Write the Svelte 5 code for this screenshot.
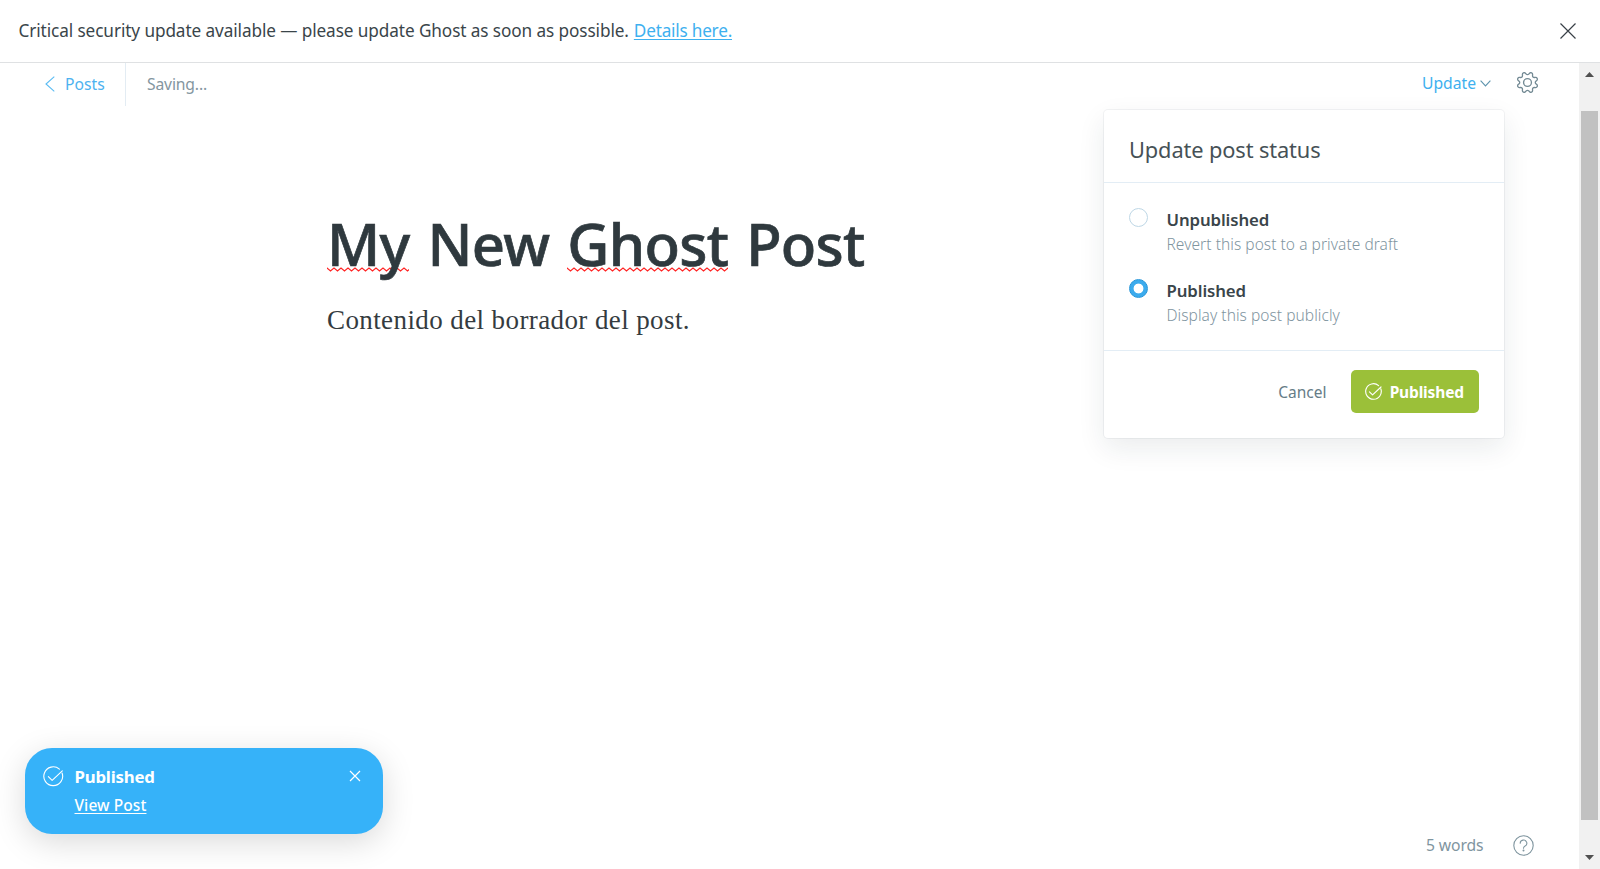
<script>
  const options = [
    { label: 'Unpublished', hint: 'Revert this post to a private draft' },
    { label: 'Published', hint: 'Display this post publicly' }
  ];
  let selected = $state('Published');
</script>

{#snippet check(size, width)}
  <svg width={size} height={size} viewBox="0 0 24 24" fill="none" stroke="currentColor" stroke-width={width} stroke-linecap="round" stroke-linejoin="round">
    <path d="M22.3 8.2A11 11 0 1 1 19.2 3.7" />
    <path d="M6.3 12.4l4.4 4.4L22.6 5.6" />
  </svg>
{/snippet}

<div class="app">
  <div class="banner">
    <p><span class="alert">Critical security update available — please update Ghost as soon as possible.</span><a href="#details">Details here.</a></p>
    <svg class="dismiss" width="16" height="16" viewBox="0 0 16 16" fill="none" stroke="#394047" stroke-width="1.2"><path d="M.5.5l15 15M15.5.5l-15 15" /></svg>
  </div>

  <div class="body">
    <main>
      <header>
        <a class="back" href="#posts">
          <svg width="10" height="16" viewBox="0 0 10 16" fill="none" stroke="#5bbcf3" stroke-width="1.1"><path d="M9.3.7L1 8l8.3 7.3" /></svg>
          <span>Posts</span>
        </a>
        <span class="status">Saving...</span>
        <div class="actions">
          <span class="update">Update</span>
          <svg class="chev" width="11" height="7" viewBox="0 0 11 7" fill="none" stroke="#5d93ad" stroke-width="1.1"><path d="M.6.6l4.9 5.3L10.4.6" /></svg>
          <svg class="gear" width="21" height="21" viewBox="0 0 24 24" fill="none" stroke="#738a94" stroke-width="1.5" stroke-linejoin="round">
            <circle cx="12" cy="12" r="4.5" />
            <path d="M10.546 2.438a1.957 1.957 0 0 0 2.908 0L14.4 1.4a1.959 1.959 0 0 1 3.41 1.413l-.071 1.4a1.958 1.958 0 0 0 2.051 2.054l1.4-.071A1.959 1.959 0 0 1 22.6 9.6l-1.04.95a1.959 1.959 0 0 0 0 2.907l1.04.943a1.959 1.959 0 0 1-1.413 3.41l-1.4-.071a1.958 1.958 0 0 0-2.056 2.056l.071 1.4A1.959 1.959 0 0 1 14.4 22.6l-.941-1.041a1.959 1.959 0 0 0-2.908 0L9.6 22.6a1.959 1.959 0 0 1-3.408-1.408l.072-1.4a1.958 1.958 0 0 0-2.056-2.056l-1.4.071A1.958 1.958 0 0 1 1.4 14.4l1.041-.943a1.959 1.959 0 0 0 0-2.907L1.4 9.6a1.958 1.958 0 0 1 1.408-3.408l1.4.071a1.958 1.958 0 0 0 2.056-2.052l-.072-1.403A1.959 1.959 0 0 1 9.6 1.4z" />
          </svg>
        </div>
      </header>

      <article>
        <h1><span class="typo">My</span> New <span class="typo">Ghost</span> Post</h1>
        <p>Contenido del borrador del post.</p>
      </article>

      <footer>
        <span>5 words</span>
        <svg width="21" height="21" viewBox="0 0 21 21" fill="none" stroke="#7f959f" stroke-width="1.1" stroke-linecap="round">
          <circle cx="10.5" cy="10.5" r="9.7" />
          <path d="M7.2 8.2a3.3 3.1 0 1 1 4.9 2.7c-1.1.6-1.6 1-1.6 2.4" />
          <circle cx="10.5" cy="15.6" r=".45" fill="#7f959f" />
        </svg>
      </footer>
    </main>

    <div class="scrollbar">
      <svg width="9" height="5" viewBox="0 0 9 5"><path d="M0 5L4.5 0 9 5z" fill="#505050" /></svg>
      <div class="thumb"></div>
      <svg width="9" height="5" viewBox="0 0 9 5"><path d="M0 0l4.5 5L9 0z" fill="#505050" /></svg>
    </div>
  </div>

  <section class="card">
    <h2>Update post status</h2>
    <div class="options">
      {#each options as o}
        <div class="option">
          <button class="radio" class:on={selected === o.label} aria-label={o.label} onclick={() => (selected = o.label)}></button>
          <div class="text">
            <div class="label">{o.label}</div>
            <div class="hint">{o.hint}</div>
          </div>
        </div>
      {/each}
    </div>
    <div class="buttons">
      <span class="cancel">Cancel</span>
      <button class="publish">{@render check(17, 1.6)}<span>Published</span></button>
    </div>
  </section>

  <aside class="toast">
    {@render check(20.5, 1.3)}
    <div class="message">
      <div class="strong">Published</div>
      <a href="#view">View Post</a>
    </div>
    <svg class="close" width="12" height="12" viewBox="0 0 12 12" fill="none" stroke="#fff" stroke-width="1.2"><path d="M1 1l10 10M11 1L1 11" /></svg>
  </aside>
</div>

<style>
  :global(body) { margin: 0; background: #fff; overflow: hidden; }
  .app { position: relative; width: 1600px; height: 869px; display: flex; flex-direction: column; font-family: "Noto Sans", "Open Sans", sans-serif; color: #3a454a; white-space: nowrap; }
  p, h1, h2 { margin: 0; }
  svg { display: block; flex: none; }
  button { border: 0; padding: 0; font: inherit; }

  .banner { box-sizing: border-box; height: 63px; flex: none; border-bottom: 1px solid #dfe1e3; display: flex; align-items: center; justify-content: space-between; padding: 0 24px 1px 18.5px; font-size: 17.2px; }
  .banner p { display: flex; gap: 5px; }
  .alert { letter-spacing: -.095px; }
  .banner a { color: #3eb0ef; letter-spacing: -.22px; text-decoration-thickness: 1px; text-underline-offset: 2px; }

  .body { flex: 1; display: flex; min-height: 0; }
  main { flex: 1; display: flex; flex-direction: column; }
  header { height: 43px; display: flex; align-items: center; font-size: 15.7px; }
  .back { box-sizing: border-box; width: 126px; height: 43px; border-right: 1px solid #e3ecf3; padding: 0 0 2px 45px; display: flex; align-items: center; gap: 10px; color: #4db2f0; text-decoration: none; letter-spacing: 0; }
  .status { margin-left: 21px; padding-bottom: 2px; color: #84969f; letter-spacing: -.15px; }
  .actions { margin-left: auto; padding-right: 41.5px; display: flex; align-items: center; color: #3eb0ef; margin-top: -4px; }
  .update { letter-spacing: 0; }
  .chev { margin: 2px 0 0 4px; }
  .gear { margin: 0 0 0 25.5px; }

  article { flex: 1; padding: 102px 0 0 327px; }
  h1 { font-size: 58px; line-height: 71px; height: 70px; font-weight: 500; -webkit-text-stroke: .7px #2f393e; letter-spacing: -.7px; word-spacing: 3.6px; color: #2f393e; }
  .typo { display: inline-block; background: url("data:image/svg+xml,%3Csvg xmlns='http://www.w3.org/2000/svg' width='7' height='5'%3E%3Cpath d='M-1.75 4.2L0 1l3.5 3L7 1l1.75 3.2' fill='none' stroke='%23f22' stroke-width='1.3'/%3E%3C/svg%3E") repeat-x 0 59px; }
  article p { margin-top: 22px; font: 27px/40px "Liberation Serif", serif; letter-spacing: .4px; color: #343b40; }

  footer { height: 48px; display: flex; align-items: center; justify-content: flex-end; gap: 29.5px; padding-right: 45px; font-size: 15.7px; letter-spacing: -.1px; color: #7f959f; }

  .scrollbar { width: 21px; background: #f1f1f1; display: flex; flex-direction: column; align-items: center; justify-content: space-between; padding: 9px 0; box-sizing: border-box; }
  .thumb { width: 17px; height: 709px; background: #c1c1c1; margin-bottom: 1px; }

  .card { position: absolute; left: 1104px; top: 110px; width: 400px; height: 328px; background: #fff; border-radius: 4px; box-shadow: 0 0 0 1px rgba(99, 114, 130, .08), 0 10px 28px rgba(27, 39, 51, .09); }
  h2 { box-sizing: border-box; height: 73px; padding: 5px 25px 0; line-height: 70px; font-size: 21.8px; font-weight: 400; letter-spacing: -.12px; color: #465156; border-bottom: 1px solid #e3edf5; }
  .options { box-sizing: border-box; height: 168px; padding: 25px 25px 0; display: flex; flex-direction: column; gap: 23px; border-bottom: 1px solid #e3edf5; }
  .option { display: flex; gap: 18.5px; height: 48px; }
  .text { margin-top: -.5px; }
  .radio { box-sizing: border-box; width: 19px; height: 19px; border-radius: 50%; border: 1px solid #bed7e6; background: #fff; flex: none; }
  .radio.on { border-color: #2696da; background: radial-gradient(circle, #fff 4.5px, #3cabed 5.3px); }
  .label { font-size: 16.8px; font-weight: 600; line-height: 24px; letter-spacing: -.1px; }
  .hint { font-size: 15.5px; font-weight: 300; line-height: 24px; letter-spacing: .05px; color: #7f959f; }
  .buttons { display: flex; align-items: center; justify-content: flex-end; gap: 24.5px; padding: 19px 25px 0; font-size: 15.5px; }
  .cancel { color: #667c87; }
  .publish { width: 128px; height: 43px; border-radius: 5px; background: #9bc039; color: #fff; display: flex; align-items: center; justify-content: center; gap: 7.5px; padding-right: 1px; font-weight: 700; letter-spacing: -.16px; }

  .toast { box-sizing: border-box; position: absolute; left: 25px; top: 748px; width: 358px; height: 86px; border-radius: 27px; background: #36b2f9; color: #fff; display: flex; align-items: flex-start; padding: 18px 22px 0 18px; box-shadow: 0 8px 32px rgba(0, 0, 0, .15); }
  .message { margin: -1px auto 0 11px; }
  .strong { font-size: 16.8px; font-weight: 700; line-height: 24px; letter-spacing: -.2px; }
  .message a { display: block; margin-top: 4px; color: #fff; font-size: 15.5px; font-weight: 500; line-height: 24px; letter-spacing: .08px; text-decoration-thickness: 1px; text-underline-offset: 2px; }
  .close { margin-top: 4px; }
</style>
